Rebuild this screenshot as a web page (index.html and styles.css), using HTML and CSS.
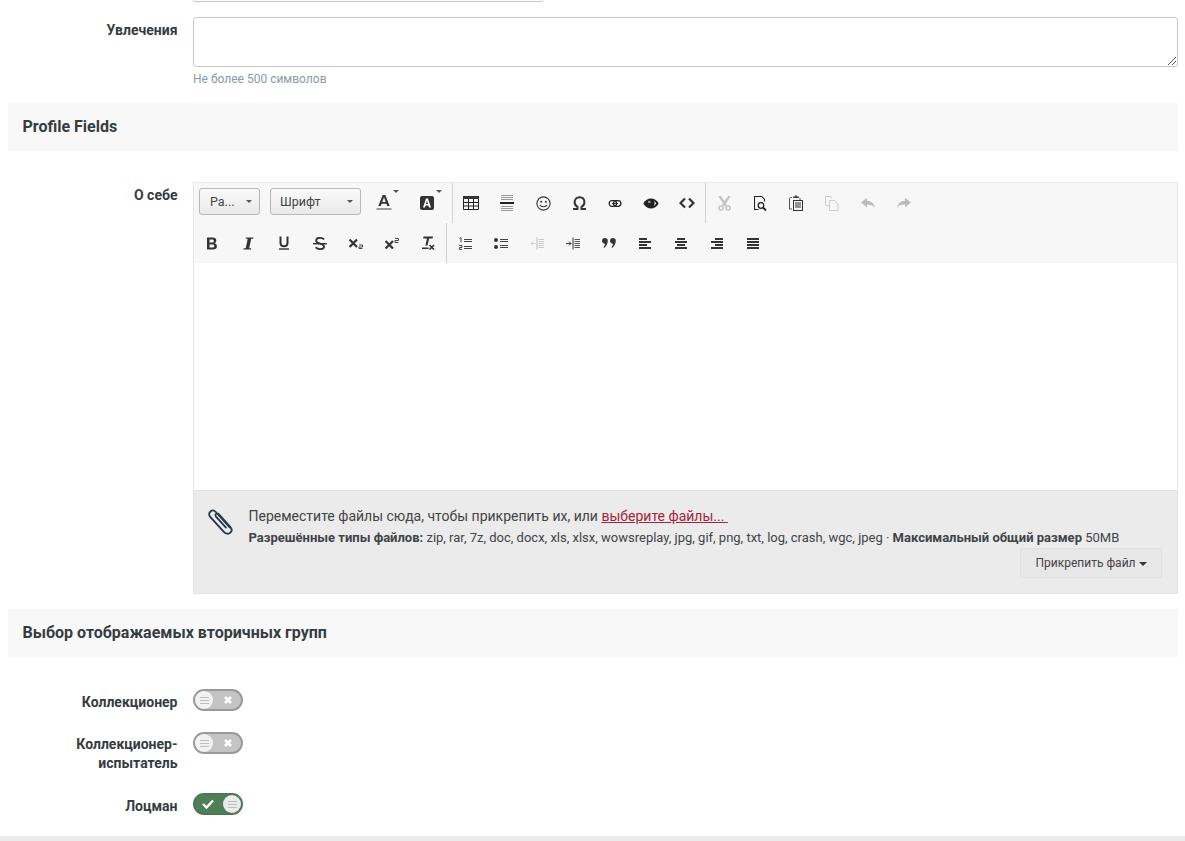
FILE: index.html
```html
<!DOCTYPE html>
<html lang="ru">
<head>
<meta charset="utf-8">
<title>Профиль</title>
<link rel="stylesheet" href="styles.css">
</head>
<body>
<div class="page">
  <div class="stub-row"><div class="stub-input"></div></div>

  <div class="row row-hobby">
    <div class="label">Увлечения</div>
    <div class="field">
      <div class="textarea">
        <svg class="grip" width="10" height="10" viewBox="0 0 10 10"><path d="M9 1L1 9M9 5L5 9" stroke="#555" stroke-width="1" fill="none"/></svg>
      </div>
      <div class="hint">Не более 500 символов</div>
    </div>
  </div>

  <h2 class="section">Profile Fields</h2>

  <div class="row row-about">
    <div class="label">О себе</div>
    <div class="field">
      <div class="editor">
        <div class="toolbar">
          <div class="tb-row tb-row-1">
            <div class="combo combo-size"><span>Ра...</span><i class="caret"></i></div>
            <div class="combo combo-font"><span>Шрифт</span><i class="caret"></i></div>
            <div class="btn btn-color">
              <svg width="16" height="16" viewBox="0 0 16 16"><path d="M2.300 11L6.700 0h2.600l4.400 11h-2.500l-.8-2.200H5.600L4.800 11zM6.300 6.900h3.400L8 2.300z" fill="#333"/><rect x="0.500" y="13" width="15" height="2" fill="#999"/></svg>
              <i class="caret caret-top"></i>
            </div>
            <div class="btn btn-color btn-bg">
              <svg width="16" height="16" viewBox="0 0 16 16"><rect x="1" y="1" width="14" height="14" rx="2" fill="#333"/><path d="M4 12.500L7 3.500h2l3 9H10L9.400 10.500H6.600l-.6 2zM7 9h2L8 5.800z" fill="#fff"/></svg>
              <i class="caret caret-top"></i>
            </div>
            <div class="sep sep-1"></div>
            <div class="btn"><svg width="16" height="14" viewBox="0 0 16 14"><path d="M0 0h16v3H0z" fill="#333"/><path d="M.5 3v10.500h15V3M5.500 3v10.500M10.500 3v10.500M.5 6.500h15M.5 10h15" stroke="#222" fill="none"/></svg></div>
            <div class="btn"><svg width="14" height="16" viewBox="0 0 14 16"><path d="M1 .5h12M1 2.500h12M1 4.500h12M1 11.500h12M1 13.500h12M1 15.500h12" stroke="#999" fill="none"/><path d="M0 7h14v2H0z" fill="#222"/></svg></div>
            <div class="btn"><svg width="15" height="15" viewBox="0 0 15 15"><circle cx="7.500" cy="7.500" r="6.600" fill="none" stroke="#333" stroke-width="1.100"/><circle cx="5.200" cy="5.800" r="1" fill="#333"/><circle cx="9.800" cy="5.800" r="1" fill="#333"/><path d="M4 9c1 2.400 6 2.400 7 0" fill="none" stroke="#333" stroke-width="1.100"/></svg></div>
            <div class="btn"><svg width="15" height="14" viewBox="0 0 15 14"><path d="M1 13h4.500v-2.200C3.500 9.800 2.600 8.200 2.600 6.300 2.600 3.200 4.600 1.200 7.500 1.200s4.900 2 4.900 5.100c0 1.900-.9 3.500-2.900 4.500V13H14" fill="none" stroke="#333" stroke-width="2"/></svg></div>
            <div class="btn"><svg width="14" height="7" viewBox="0 0 15 8"><rect x=".8" y=".8" width="8.500" height="6.400" rx="3.200" fill="none" stroke="#222" stroke-width="1.400"/><rect x="5.700" y=".8" width="8.500" height="6.400" rx="3.200" fill="none" stroke="#222" stroke-width="1.400"/><path d="M4 4h7" stroke="#222"/></svg></div>
            <div class="btn"><svg width="16" height="11" viewBox="0 0 16 11"><path d="M.3 5.500C2.200 2 5 .4 8 .4s5.800 1.600 7.700 5.100C13.800 9 11 10.600 8 10.600S2.200 9 .3 5.500z" fill="#222"/><path d="M13.300 5.500c-.8 1-1.600 1.800-2.500 2.400.5-.7.800-1.500.8-2.400s-.3-1.700-.8-2.400c.9.600 1.700 1.400 2.500 2.400z" fill="#f7f7f7"/><circle cx="6.300" cy="4" r="1.300" fill="#999"/></svg></div>
            <div class="btn"><svg width="16" height="12" viewBox="0 0 16 12"><path d="M6 1.500L1.500 6 6 10.500M10 1.500L14.500 6 10 10.500" fill="none" stroke="#333" stroke-width="2.200"/></svg></div>
            <div class="sep"></div>
            <div class="btn"><svg width="13" height="15" viewBox="0 0 13 15"><path d="M1.500 0L8 9.500M11.500 0L5 9.500" stroke="#c4c4c4" stroke-width="2.400" fill="none"/><circle cx="3" cy="12" r="2" fill="none" stroke="#c4c4c4" stroke-width="1.500"/><circle cx="10" cy="12" r="2" fill="none" stroke="#c4c4c4" stroke-width="1.500"/></svg></div>
            <div class="btn"><svg width="13" height="15" viewBox="0 0 13 15"><path d="M8 .5H.5v13h4M8 .5l2.500 3v2" fill="none" stroke="#222" stroke-width="1.100"/><circle cx="7" cy="9.500" r="2.800" fill="none" stroke="#222" stroke-width="1.300"/><path d="M9 11.500l3 3" stroke="#222" stroke-width="1.800"/></svg></div>
            <div class="btn"><svg width="14" height="16" viewBox="0 0 14 16"><path d="M3 2.500H1.500q-1 0-1 1v10.500h2.500" fill="none" stroke="#555"/><path d="M4 3V1.500h2V.5h2v1h2V3z" fill="#444"/><path d="M11 3v2" stroke="#555"/><rect x="4.500" y="5.500" width="9" height="10" fill="none" stroke="#333"/><path d="M6 8h6M6 10h6M6 12h6" stroke="#333"/></svg></div>
            <div class="btn"><svg width="14" height="15" viewBox="0 0 14 15"><path d="M4.500 9.500H.5V.5h5l1.500 2" fill="none" stroke="#ccc"/><path d="M4.500 4.500h5l3.500 3.500v6.500H4.500z" fill="none" stroke="#ccc"/></svg></div>
            <div class="btn"><svg width="14" height="12" viewBox="0 0 14 12"><path d="M0 5.500L6 .8v3C10.500 4 13 6.500 14 11c-2-2.500-4.200-3.500-8-3.400v3z" fill="#bbb"/></svg></div>
            <div class="btn"><svg width="14" height="12" viewBox="0 0 14 12"><path d="M14 5.500L8 .8v3C3.500 4 1 6.500 0 11c2-2.500 4.200-3.500 8-3.400v3z" fill="#bbb"/></svg></div>
          </div>
          <div class="tb-row">
            <div class="btn"><svg width="12" height="13" viewBox="0 0 12 13"><path d="M1 .5h5.500c2.500 0 3.800 1.200 3.800 3.100 0 1.200-.6 2.100-1.600 2.600 1.400.4 2.200 1.500 2.200 3 0 2.200-1.500 3.300-4 3.300H1zM3.500 2.500v3h2.700c1 0 1.600-.5 1.600-1.500s-.6-1.500-1.600-1.500zM3.500 7.400v3.100h3c1.100 0 1.700-.5 1.700-1.600s-.6-1.500-1.700-1.500z" fill="#333"/></svg></div>
            <div class="btn"><svg width="12" height="13" viewBox="0 0 12 13"><path d="M4 .5h7.500l-.3 1.300H9.200L7.200 11.200h2l-.3 1.300H1.400l.3-1.300h2l2-9.400H3.700z" fill="#333"/></svg></div>
            <div class="btn"><svg width="12" height="14" viewBox="0 0 12 14"><path d="M2.500.5v6.300c0 2.200 1.300 3.500 3.500 3.500s3.500-1.300 3.500-3.500V.5" fill="none" stroke="#333" stroke-width="2"/><path d="M1 12.300h10v1.400H1z" fill="#333"/></svg></div>
            <div class="btn"><svg width="14" height="13" viewBox="0 0 14 13"><path d="M11 2.500C10.200 1.300 8.800.9 7 .9 4.700.9 3.200 2 3.200 3.700c0 3.800 7.800 2 7.800 5.800 0 1.700-1.600 2.600-4 2.600-1.900 0-3.400-.6-4.200-1.900" fill="none" stroke="#333" stroke-width="1.900"/><path d="M0 6h14v1.400H0z" fill="#333"/></svg></div>
            <div class="btn"><svg width="14" height="11" viewBox="0 0 14 11"><path d="M.5 1.500l7.500 7.500M8 1.500L.5 9" stroke="#333" stroke-width="2.200" fill="none"/><path d="M10 7h3.500v2H10v1.500h3.500" stroke="#333" fill="none" stroke-width=".9"/></svg></div>
            <div class="btn"><svg width="14" height="11" viewBox="0 0 14 11"><path d="M.5 3l7.500 7.500M8 3L.5 10.500" stroke="#333" stroke-width="2.200" fill="none"/><path d="M10 .5h3.500v2H10v2h3.500" stroke="#333" fill="none" stroke-width=".9"/></svg></div>
            <div class="btn"><svg width="14" height="14" viewBox="0 0 14 14"><path d="M2.500.5h9.500l-.4 2H8.200L6.500 9.500H4.400L6 2.500H2.100z" fill="#333"/><path d="M1 11.500h6.500V13H1z" fill="#333"/><path d="M8.500 9l4.500 4.500M13 9l-4.500 4.500" stroke="#333" stroke-width="1.600"/></svg></div>
            <div class="sep"></div>
            <div class="btn"><svg width="13" height="13" viewBox="0 0 13 13"><path d="M5 2.500h8M5 4.500h8M5 9.500h8M5 11.500h8" stroke="#444" fill="none"/><path d="M.5 1.500L2 .5v5M0 8.500h3v2H.5v2H3" stroke="#444" fill="none"/></svg></div>
            <div class="btn"><svg width="14" height="11" viewBox="0 0 14 11"><circle cx="2" cy="2" r="2" fill="#333"/><circle cx="2" cy="9" r="2" fill="#333"/><path d="M6 1.500h8M6 3.500h8M6 7.500h8M6 9.500h8" stroke="#444" fill="none" stroke-width="1"/></svg></div>
            <div class="btn"><svg width="14" height="13" viewBox="0 0 14 13"><path d="M7 .5v12" stroke="#bbb"/><path d="M8.500 2.500H14M8.500 4.500H14M8.500 6.500H14M8.500 8.500H14M8.500 10.500H14" stroke="#ccc"/><path d="M5.500 6.500H1M3 4.500l-2 2 2 2" stroke="#ccc" fill="none"/></svg></div>
            <div class="btn"><svg width="14" height="13" viewBox="0 0 14 13"><path d="M7 .5v12" stroke="#333"/><path d="M8.500 2.500H14M8.500 4.500H14M8.500 6.500H14M8.500 8.500H14M8.500 10.500H14" stroke="#555"/><path d="M0 6.500h5M3 4.500l2 2-2 2" stroke="#333" fill="none"/></svg></div>
            <div class="btn"><svg width="14" height="10" viewBox="0 0 14 10"><path d="M3 0c1.600 0 2.800 1.100 2.800 2.700 0 2.900-1.500 5.600-3.700 7.300L1.500 9.300c.8-1 1.300-2 1.500-3.500C1.300 5.700 0 4.500 0 2.800 0 1.200 1.300 0 3 0zM11 0c1.600 0 2.800 1.100 2.800 2.700 0 2.900-1.500 5.600-3.700 7.300l-.6-.7c.8-1 1.300-2 1.500-3.500C9.300 5.700 8 4.500 8 2.800 8 1.200 9.300 0 11 0z" fill="#333"/></svg></div>
            <div class="btn"><svg width="12" height="11" viewBox="0 0 12 11"><path d="M0 0h8v2H0zM0 3h12v2H0zM0 6h8v2H0zM0 9h12v2H0z" fill="#333"/></svg></div>
            <div class="btn"><svg width="12" height="11" viewBox="0 0 12 11"><path d="M2 0h8v2H2zM0 3h12v2H0zM2 6h8v2H2zM0 9h12v2H0z" fill="#333"/></svg></div>
            <div class="btn"><svg width="12" height="11" viewBox="0 0 12 11"><path d="M4 0h8v2H4zM0 3h12v2H0zM4 6h8v2H4zM0 9h12v2H0z" fill="#333"/></svg></div>
            <div class="btn"><svg width="12" height="11" viewBox="0 0 12 11"><path d="M0 0h12v2H0zM0 3h12v2H0zM0 6h12v2H0zM0 9h12v2H0z" fill="#333"/></svg></div>
          </div>
        </div>
        <div class="edit-area"></div>
        <div class="attach">
          <svg class="clip" width="25" height="26" viewBox="1.800 3.700 23.200 24.300"><path d="M22 21L9 6.500C7.600 4.900 5.500 4.700 4 6s-1.600 3.500-.2 5.100L16.500 25c2 2.200 4.500 2.300 6.100.8s1.500-3.700-.1-5.500L12 8.700c-.9-1-2-1.100-2.800-.4s-.7 1.800.2 2.800L18.500 21" fill="none" stroke="#26384a" stroke-width="1.700" stroke-linecap="round"/></svg>
          <div class="attach-body">
            <div class="attach-main">Переместите файлы сюда, чтобы прикрепить их, или <a class="pick">выберите файлы...&nbsp;</a></div>
            <div class="attach-info"><b>Разрешённые типы файлов:</b> zip, rar, 7z, doc, docx, xls, xlsx, wowsreplay, jpg, gif, png, txt, log, crash, wgc, jpeg · <b>Максимальный общий размер</b> 50MB</div>
            <div class="attach-actions"><div class="attach-btn">Прикрепить файл <i class="caret caret-dark"></i></div></div>
          </div>
        </div>
      </div>
    </div>
  </div>

  <h2 class="section section-groups">Выбор отображаемых вторичных групп</h2>

  <div class="row row-toggle row-t1">
    <div class="label">Коллекционер</div>
    <div class="toggle">
      <span class="knob"><i class="lines"></i></span>
      <svg class="mark" width="10" height="10" viewBox="0 0 10 10"><path d="M2 2l6 6M8 2L2 8" stroke="#fff" stroke-width="2.600"/></svg>
    </div>
  </div>
  <div class="row row-toggle row-t2">
    <div class="label">Коллекционер-<br>испытатель</div>
    <div class="toggle">
      <span class="knob"><i class="lines"></i></span>
      <svg class="mark" width="10" height="10" viewBox="0 0 10 10"><path d="M2 2l6 6M8 2L2 8" stroke="#fff" stroke-width="2.600"/></svg>
    </div>
  </div>
  <div class="row row-toggle row-t3">
    <div class="label">Лоцман</div>
    <div class="toggle on">
      <svg class="mark" width="12" height="10" viewBox="0 0 12 10"><path d="M1 5l3.500 3.500L11 1.500" fill="none" stroke="#fff" stroke-width="2.400"/></svg>
      <span class="knob"><i class="lines"></i></span>
    </div>
  </div>
</div>
<div class="footer-bar"></div>
</body>
</html>
```
FILE: styles.css
```css
* { box-sizing: border-box; }
html, body { margin: 0; padding: 0; height: 841px; overflow: hidden; background: #fff; }
body { font-family: Roboto, "Noto Sans", sans-serif; font-size: 14px; color: #333; position: relative; }
.page { padding: 0 7px 0 8px; }

.stub-row { padding-left: 185px; height: 2px; }
.stub-input { width: 350px; height: 2px; border: 1px solid #c8c8c8; border-top: 0; border-radius: 0 0 4px 4px; }

.row { display: flex; }
.label { width: 169.500px; flex: none; text-align: right; font-weight: 700; line-height: 21px; color: #353c41; }
.field { flex: 1; min-width: 0; margin-left: 15.500px; }
.row-hobby { margin-top: 15px; }
.row-hobby .label { padding-top: 3px; }
.textarea { height: 50px; border: 1px solid #c8c8c8; border-radius: 3px; background: #fff; position: relative; }
.grip { position: absolute; right: 0; bottom: 0; }
.hint { margin-top: 5px; font-size: 12px; line-height: 15px; color: #8a9aa6; }

.section { margin: 16px 0 0; height: 48px; padding: 0 14.500px; background: #f8f8f8; font-size: 16px; font-weight: 700; line-height: 47px; color: #353c41; }
.section-groups { margin-top: 15px; }

.row-about { margin-top: 31px; }
.row-about .label { padding-top: 3px; }
.editor { border: 1px solid #e4e4e4; border-top-color: #e8e8e8; height: 412px; display: flex; flex-direction: column; background: #fff; }
.toolbar { background: #f7f7f7; height: 80px; flex: none; }
.tb-row { display: flex; height: 40px; align-items: stretch; }
.tb-row-1 { padding-left: 5px; }
.btn { width: 36px; flex: none; display: flex; align-items: center; justify-content: center; position: relative; }
.sep { width: 1px; background: #cfcfcf; flex: none; }
.sep-1 { margin-left: 7px; }
.combo { height: 27px; margin-top: 5px; border: 1px solid #b8b8b8; border-radius: 3px; background: linear-gradient(#fafafa, #e9e9e9); display: flex; align-items: center; justify-content: space-between; padding: 0 7px 0 10px; font-size: 12.500px; color: #444; flex: none; }
.combo-size { width: 61px; }
.combo-font { width: 91px; margin-left: 10px; padding-left: 9px; }
.caret { display: inline-block; width: 0; height: 0; border-left: 3px solid transparent; border-right: 3px solid transparent; border-top: 3px solid #555; }
.btn-color { margin-left: 5px; }
.btn-bg { margin-left: 7px; }
.caret-top { position: absolute; top: 7px; right: 3px; }
.edit-area { flex: 1; background: #fff; }

.attach { height: 103px; flex: none; background: #ebebeb; border-top: 1px solid #e2e2e2; display: flex; padding: 17px 15px 0 14px; }
.clip { flex: none; margin: 1px 15.500px 0 0; }
.attach-body { flex: 1; min-width: 0; }
.attach-main { font-size: 14px; line-height: 18px; margin-top: -1px; color: #444; }
.pick { color: #a5243d; text-decoration: underline; }
.attach-info { font-size: 13px; line-height: 16px; margin-top: 5px; color: #3f4448; white-space: nowrap; }
.attach-actions { display: flex; justify-content: flex-end; margin-top: 2px; }
.attach-btn { width: 142px; height: 30px; background: #e7e7e7; border: 1px solid #e0e0e0; border-radius: 2px; font-size: 12px; line-height: 28px; text-align: center; color: #444; }
.caret-dark { border-top-color: #333; border-left-width: 4px; border-right-width: 4px; border-top-width: 4px; vertical-align: 1px; }

.row-toggle .label { line-height: 19px; }
.row-t1 { margin-top: 32px; }
.row-t1 .label { padding-top: 4px; }
.row-t2 { margin-top: 20px; }
.row-t2 .label { padding-top: 3px; }
.row-t3 { margin-top: 20px; }
.row-t3 .label { padding-top: 4px; }
.toggle { width: 50px; height: 22px; margin-left: 15.500px; flex: none; border: 2px solid #9a9a9a; border-radius: 11px; background: #c4c4c4; display: flex; align-items: center; justify-content: space-between; padding: 0 8px 0 0; }
.toggle.on { background: #4f7f56; border-color: #4a7651; padding: 0 0 0 7px; }
.knob { width: 18px; height: 18px; border-radius: 50%; background: #f2f2f2; display: flex; align-items: center; justify-content: center; flex: none; }
.toggle.on .knob { background: #e9ecea; }
.lines { display: block; width: 9px; height: 7px; border-top: 1px solid #bdbdbd; border-bottom: 1px solid #bdbdbd; position: relative; }
.lines::after { content: ""; position: absolute; left: 0; right: 0; top: 2px; height: 1px; background: #bdbdbd; }
.footer-bar { position: absolute; left: 0; right: 0; top: 836px; height: 5px; background: #ebebeb; }
```
